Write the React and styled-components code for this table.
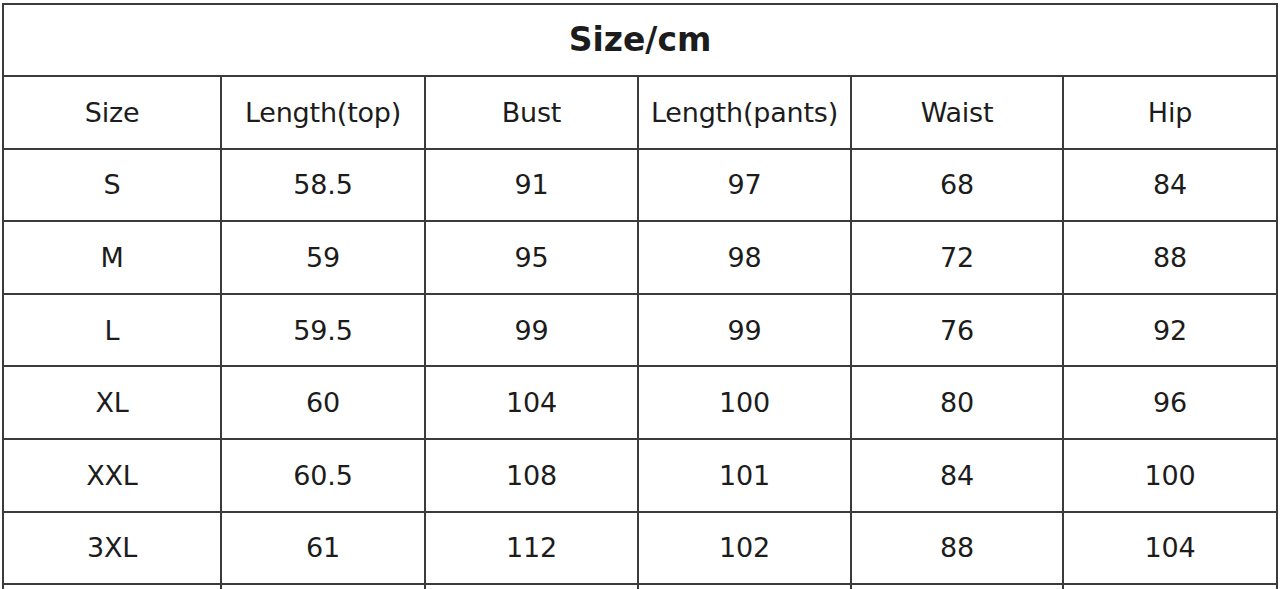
import React from "react";
import styled, { createGlobalStyle } from "styled-components";

const GlobalStyle = createGlobalStyle`
  html, body {
    margin: 0;
    padding: 0;
    background: #fff;
    overflow: hidden;
  }
  body {
    font-family: "DejaVu Sans", Verdana, sans-serif;
    color: #1c1c1c;
  }
`;

const Page = styled.div`
  padding: 3px 0 0 2px;
  width: 1280px;
  height: 589px;
  box-sizing: border-box;
  overflow: hidden;
`;

const Table = styled.table`
  border-collapse: collapse;
  table-layout: fixed;
  width: 1274px;
`;

const Col = styled.col`
  width: ${({ $w }) => $w}px;
`;

const Cell = styled.td`
  border: 2px solid #3b3b3b;
  height: ${({ $h }) => $h || 70.6}px;
  padding: 0;
  text-align: center;
  vertical-align: middle;
  font-size: 27px;
  font-weight: 400;
  white-space: nowrap;
  letter-spacing: -0.2px;
`;

const TitleCell = styled(Cell)`
  font-size: 33px;
  font-weight: 700;
  letter-spacing: 0;
  padding-bottom: 2px;
`;

const widths = [218, 204, 213, 213, 212, 214];

const header = ["Size", "Length(top)", "Bust", "Length(pants)", "Waist", "Hip"];

const rows = [
  ["S", "58.5", "91", "97", "68", "84"],
  ["M", "59", "95", "98", "72", "88"],
  ["L", "59.5", "99", "99", "76", "92"],
  ["XL", "60", "104", "100", "80", "96"],
  ["XXL", "60.5", "108", "101", "84", "100"],
  ["3XL", "61", "112", "102", "88", "104"],
];

export default function App() {
  return (
    <Page>
      <GlobalStyle />
      <Table>
        <colgroup>
          {widths.map((w, i) => (
            <Col key={i} $w={w} />
          ))}
        </colgroup>
        <tbody>
          <tr>
            <TitleCell colSpan={6} $h={68}>
              Size/cm
            </TitleCell>
          </tr>
          <tr>
            {header.map((h) => (
              <Cell key={h}>{h}</Cell>
            ))}
          </tr>
          {rows.map((r) => (
            <tr key={r[0]}>
              {r.map((v, i) => (
                <Cell key={i}>{v}</Cell>
              ))}
            </tr>
          ))}
          <tr>
            {widths.map((w, i) => (
              <Cell key={i} />
            ))}
          </tr>
        </tbody>
      </Table>
    </Page>
  );
}
